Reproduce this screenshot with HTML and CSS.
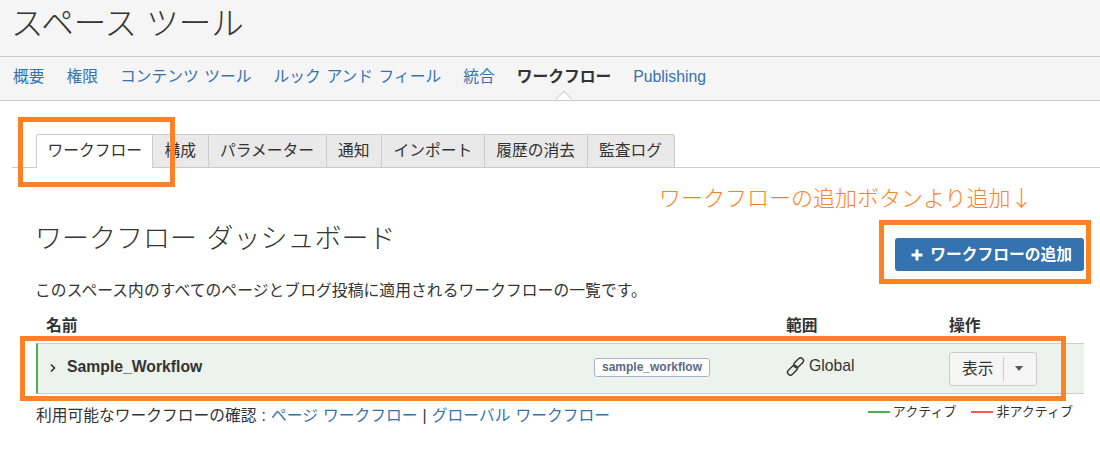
FILE: index.html
```html
<!DOCTYPE html>
<html lang="ja">
<head>
<meta charset="utf-8">
<title>スペース ツール</title>
<link rel="stylesheet" href="styles.css">
</head>
<body>
<header class="page-head"><h1 class="page-title">スペース ツール</h1></header>
<nav class="space-nav">
  <a class="nav-link">概要</a>
  <a class="nav-link">権限</a>
  <a class="nav-link">コンテンツ ツール</a>
  <a class="nav-link">ルック アンド フィール</a>
  <a class="nav-link">統合</a>
  <a class="nav-link nav-current">ワークフロー</a>
  <a class="nav-link">Publishing</a>
</nav>
<main class="content">
  <ul class="tabs">
    <li class="tab tab-active">ワークフロー</li>
    <li class="tab">構成</li>
    <li class="tab">パラメーター</li>
    <li class="tab">通知</li>
    <li class="tab">インポート</li>
    <li class="tab">履歴の消去</li>
    <li class="tab">監査ログ</li>
  </ul>
  <section class="panel">
    <p class="hint">ワークフローの追加ボタンより追加↓</p>
    <div class="title-row">
      <h2 class="panel-title">ワークフロー ダッシュボード</h2>
      <button class="add-btn"><svg class="plus" viewBox="0 0 12 12" width="12" height="12"><path d="M6 0.5v11M0.5 6h11" stroke="#fff" stroke-width="3"/></svg>ワークフローの追加</button>
    </div>
    <p class="intro">このスペース内のすべてのページとブログ投稿に適用されるワークフローの一覧です。</p>
    <div class="grid grid-head">
      <div class="head-name">名前</div>
      <div>範囲</div>
      <div>操作</div>
    </div>
    <div class="grid grid-row">
      <div class="cell-name">
        <svg class="chev" viewBox="0 0 8 10" width="8" height="10"><path d="M2 1.5 5.5 5 2 8.5" fill="none" stroke="#333" stroke-width="1.6"/></svg>
        <span class="wf-name">Sample_Workflow</span>
        <span class="wf-key">sample_workflow</span>
      </div>
      <div class="cell-scope">
        <svg class="link-icon" viewBox="0 0 20 20" width="19" height="19"><g fill="none" stroke="#333" stroke-width="1.5"><rect x="7.2" y="3.1" width="12" height="6" rx="3" transform="rotate(-45 13.2 6.1)"/><rect x="0.8" y="10.9" width="12" height="6" rx="3" transform="rotate(-45 6.8 13.9)"/></g></svg>
        <span>Global</span>
      </div>
      <div class="cell-action">
        <div class="view-btn"><span class="view-label">表示</span><span class="view-caret"></span></div>
      </div>
    </div>
    <div class="foot">
      <p class="foot-links">利用可能なワークフローの確認 : <a class="link">ページ ワークフロー</a> | <a class="link">グローバル ワークフロー</a></p>
      <div class="legend">
        <span class="swatch swatch-on"></span><span class="legend-text">アクティブ</span>
        <span class="swatch swatch-off"></span><span class="legend-text">非アクティブ</span>
      </div>
    </div>
  </section>
</main>
<div class="mark mark-tab"></div>
<div class="mark mark-add"></div>
<div class="mark mark-row"></div>
</body>
</html>
```
FILE: styles.css
```css
* { box-sizing: border-box; }
html, body { margin: 0; padding: 0; }
body {
  position: relative;
  width: 1100px;
  height: 474px;
  overflow: hidden;
  background: #fff;
  color: #333;
  font-family: "Liberation Sans", "Noto Sans CJK JP", sans-serif;
  font-size: 15.75px;
  line-height: 22px;
}
.page-head {
  height: 57px;
  padding: 0 11px;
  background: #f5f5f5;
  border-bottom: 1px solid #ccc;
}
.page-title {
  margin: 0;
  font-size: 32.5px;
  font-weight: 300;
  line-height: 48px;
}
.space-nav {
  position: relative;
  display: flex;
  gap: 22px;
  height: 44px;
  padding: 9px 13px 0;
  background: #f5f5f5;
  border-bottom: 1px solid #ccc;
  overflow: hidden;
  word-spacing: 1.2px;
}
.nav-link { color: #3572b0; white-space: nowrap; }
.nav-current { position: relative; color: #333; font-weight: 700; }
.nav-current::after {
  content: "";
  position: absolute;
  left: 41px;
  top: 27px;
  width: 11px;
  height: 11px;
  background: #fff;
  border-left: 1px solid #ccc;
  border-top: 1px solid #ccc;
  transform: rotate(45deg);
}
.content { padding: 33px 0 0 12px; }
.tabs {
  display: flex;
  height: 34px;
  margin: 0;
  padding: 0 0 0 24px;
  list-style: none;
  border-bottom: 1px solid #ccc;
}
.tab {
  height: 33px;
  margin-right: -1px;
  padding: 5px 11.5px 0;
  background: #e9e9e9;
  border: 1px solid #ccc;
  border-bottom: 0;
  white-space: nowrap;
}
.tab:first-child { border-top-left-radius: 3px; }
.tab:last-child { border-top-right-radius: 3px; }
.tab-active {
  height: 34px;
  padding: 5px 10px 0 10.5px;
  background: #fff;
  position: relative;
}
.panel { padding: 0 16px 0 24px; }
.hint {
  margin: 15px 0 0;
  padding-left: 623px;
  color: #ff8126;
  font-family: "Noto Sans CJK JP", sans-serif;
  font-size: 22px;
  font-weight: 300;
  line-height: 26px;
  white-space: nowrap;
}
.title-row {
  display: flex;
  justify-content: space-between;
  align-items: flex-start;
  margin-top: 10px;
}
.panel-title {
  margin: 0 0 0 -1px;
  font-size: 27px;
  font-weight: 300;
  line-height: 40px;
  white-space: nowrap;
  word-spacing: 2px;
}
.add-btn {
  display: flex;
  align-items: center;
  height: 33px;
  margin-top: 19px;
  padding: 0 12px 0 16px;
  border: 0;
  border-radius: 3px;
  background: #3572b0;
  color: #fff;
  font: inherit;
  font-weight: 700;
  white-space: nowrap;
}
.plus { margin-right: 7px; }
.intro { margin: 9px 0 0 -1px; white-space: nowrap; letter-spacing: 0.08px; }
.grid {
  display: grid;
  grid-template-columns: 750px 163px 135px;
}
.grid-head {
  height: 41px;
  padding-top: 13px;
  font-weight: 700;
}
.head-name { padding-left: 10px; }
.grid-row {
  height: 51px;
  align-items: center;
  background: #ecf2ec;
  border-top: 1px solid #ccc;
  border-bottom: 1px solid #ccc;
  border-left: 2px solid #4eaf4e;
}
.cell-name {
  display: flex;
  align-items: center;
  margin-top: -2px;
  padding: 0 78px 0 11px;
}
.chev { margin-right: 10px; }
.wf-name { font-weight: 700; margin-top: -1px; }
.wf-key {
  margin-left: auto;
  height: 19px;
  padding: 0 7px;
  background: #fff;
  border: 1px solid #a3b5cc;
  border-radius: 3px;
  color: #5a6b85;
  font-size: 12px;
  font-weight: 700;
  line-height: 17px;
}
.cell-scope { display: flex; align-items: center; gap: 4px; margin-top: -5px; margin-left: -2px; }
.cell-action { margin-left: -2px; }
.view-btn {
  display: flex;
  align-items: center;
  width: 88px;
  height: 34px;
  padding-left: 12px;
  background: #f5f5f5;
  border: 1px solid #ccc;
  border-radius: 3px;
}
.view-label { padding-right: 9px; border-right: 1px solid #ccc; line-height: 24px; }
.view-caret {
  margin-left: 11px;
  width: 0;
  height: 0;
  border-left: 4.5px solid transparent;
  border-right: 4.5px solid transparent;
  border-top: 5px solid #555;
}
.foot {
  display: flex;
  justify-content: space-between;
  align-items: flex-start;
  padding-right: 11px;
}
.foot-links { margin: 11px 0 0; white-space: nowrap; word-spacing: 0.7px; }
.link { color: #3572b0; }
.legend {
  display: flex;
  align-items: center;
  margin-top: 8px;
  color: #333;
  font-size: 13px;
  line-height: 20px;
}
.swatch { width: 22px; height: 2px; margin-right: 3px; }
.swatch-on { background: #4eaf4e; }
.swatch-off { margin-left: 15px; background: #f55; }
.legend-text { white-space: nowrap; }
.mark { position: absolute; border: 5px solid #ff8126; }
.mark-tab { left: 18px; top: 117px; width: 157px; height: 70px; }
.mark-add { left: 879px; top: 220px; width: 212px; height: 64px; }
.mark-row { left: 20px; top: 336px; width: 1046px; height: 65px; }
```
